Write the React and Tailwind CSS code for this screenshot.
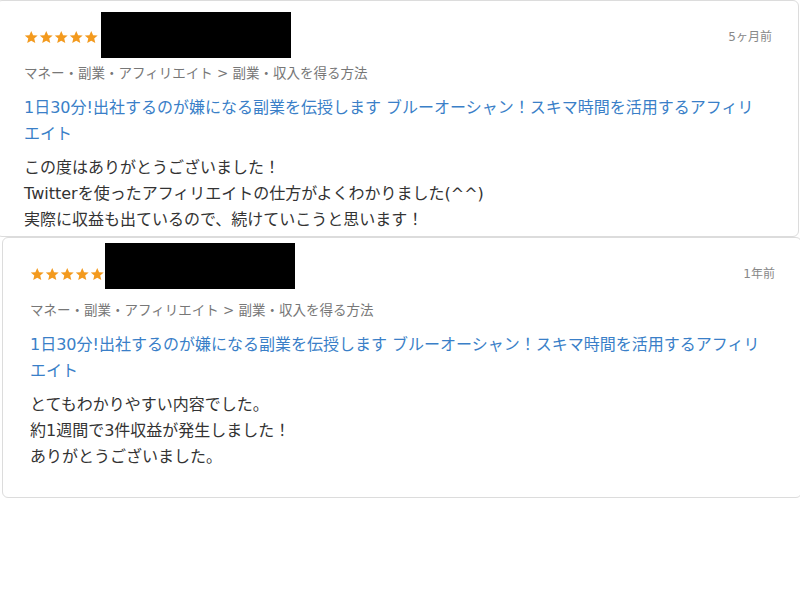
import React from "react";

const reviews = [
  {
    id: 1,
    date: "5ヶ月前",
    body: ["この度はありがとうございました！", "Twitterを使ったアフィリエイトの仕方がよくわかりました(^^)", "実際に収益も出ているので、続けていこうと思います！"],
    card: "ml-[-4px] w-[803px] pb-[3px] pr-[26px]",
    mask: "left-[104px] top-[11px]",
  },
  {
    id: 2,
    date: "1年前",
    body: ["とてもわかりやすい内容でした。", "約1週間で3件収益が発生しました！", "ありがとうございました。"],
    card: "ml-[2px] w-[800px] pb-[27px] pr-[26px]",
    mask: "left-[102px] top-[5px]",
  },
];

function Stars() {
  return (
    <div className="flex gap-[0.5px]">
      {[0, 1, 2, 3, 4].map((i) => (
        <svg key={i} viewBox="0 0 24 24" className="w-[14.5px] h-[14.5px]">
          <path
            d="M12 1.5l3.1 7.1 7.6.6-5.8 5 1.8 7.5L12 17.7l-6.7 4 1.8-7.5-5.8-5 7.6-.6z"
            fill="#f39a1e"
          />
        </svg>
      ))}
    </div>
  );
}

function ReviewCard({ r }) {
  return (
    <div className={`relative bg-white border border-[#dcdcdc] rounded-[6px] pl-[27px] pt-[26px] ${r.card}`}>
      <div className={`absolute w-[190px] h-[46px] bg-black ${r.mask}`} />
      <div className="flex items-center justify-between h-[20px]">
        <Stars />
        <span className="text-[12px] leading-[20px] text-[#888]">{r.date}</span>
      </div>
      <p className="mt-[16px] text-[13.5px] leading-[20px] text-[#777]">
        マネー・副業・アフィリエイト &gt; 副業・収入を得る方法
      </p>
      <p className="mt-[12px] max-w-[744px] text-[16px] leading-[26px] text-[#3a7fc8]">
        1日30分!出社するのが嫌になる副業を伝授します ブルーオーシャン！スキマ時間を活用するアフィリエイト
      </p>
      <div className="mt-[8px] text-[16px] leading-[26px] text-[#333]">
        {r.body.map((line) => (
          <p key={line}>{line}</p>
        ))}
      </div>
    </div>
  );
}

export default function App() {
  return (
    <div
      className="w-[800px] h-[600px] bg-white overflow-hidden"
      style={{ fontFamily: '"DejaVu Sans", "Noto Sans CJK JP", sans-serif' }}
    >
      {reviews.map((r) => (
        <ReviewCard key={r.id} r={r} />
      ))}
    </div>
  );
}
